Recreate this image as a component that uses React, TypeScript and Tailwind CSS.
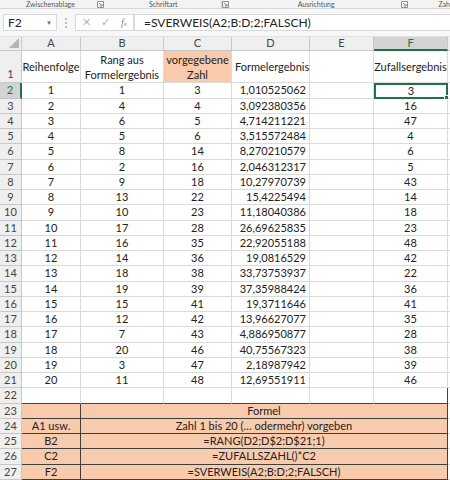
import React from 'react';

const A = ['1','2','3','4','5','6','7','8','9','10','11','12','13','14','15','16','17','18','19','20'];
const B = ['1','4','6','5','8','2','9','13','10','17','16','14','18','19','15','12','7','20','3','11'];
const C = ['3','4','5','6','14','16','18','22','23','28','35','36','38','39','41','42','43','46','47','48'];
const D = [
  '1,010525062', '3,092380356', '4,714211221', '3,515572484', '8,270210579',
  '2,046312317', '10,27970739', '15,4225494', '11,18040386', '26,69625835',
  '22,92055188', '19,0816529', '33,73753937', '37,35988424', '19,3711646',
  '13,96627077', '4,886950877', '40,75567323', '2,18987942', '12,69551911'
];
const F = ['3','16','47','4','6','5','43','14','18','23','48','42','22','36','41','35','28','38','39','46'];

const formeln = [
  ['', 'Formel'],
  ['A1 usw.', 'Zahl 1 bis 20 (… odermehr) vorgeben'],
  ['B2', '=RANG(D2;D$2:D$21;1)'],
  ['C2', '=ZUFALLSZAHL()*C2'],
  ['F2', '=SVERWEIS(A2;B:D;2;FALSCH)'],
];

// every 4th row is a pixel taller, like the scaled screenshot
const rowH = (n: number) => ((n - 2) % 4 === 0 ? 'h-[16px]' : 'h-[15px]');

const cell = 'border-r border-b border-[#dadada] flex items-center shrink-0';

const RowHead = ({ n, active }: { n: number; active?: boolean }) => (
  <div
    className={`w-[22px] shrink-0 flex items-center justify-center border-r border-b ${
      active
        ? 'bg-[#d3d3d3] text-[#217346] border-r-[#217346] border-r-2 border-b-[#c4c4c4]'
        : 'bg-[#efefef] text-[#444] border-[#c8c8c8]'
    }`}
  >
    {n}
  </div>
);

const Launcher = () => (
  <svg width="7" height="7" viewBox="0 0 7 7" className="shrink-0">
    <path d="M0.5 0.5h6v6h-6z" fill="none" stroke="#777" strokeWidth="0.8" />
    <path d="M2 2l3 3M5 3v2h-2" fill="none" stroke="#777" strokeWidth="0.8" />
  </svg>
);

export default function App() {
  return (
    <div className="w-[450px] h-[480px] overflow-hidden bg-white text-[11px] text-[#222] font-['Lato','Liberation_Sans',sans-serif] flex flex-col">
      {/* ribbon group labels */}
      <div className="h-[9px] bg-[#f3f3f3] border-b border-[#d6d6d6] flex items-end text-[7px] leading-[8px] text-[#555] shrink-0">
        <div className="w-[98px] pl-[26px]">Zwischenablage</div>
        <div className="w-[52px] flex items-center"><Launcher /></div>
        <div className="w-[73px]">Schriftart</div>
        <div className="w-[77px] flex items-center border-l border-[#d6d6d6] pl-[0px]"><Launcher /></div>
        <div className="w-[104px]">Ausrichtung</div>
        <div className="w-[38px] flex items-center"><Launcher /></div>
        <div>Zah</div>
      </div>

      {/* formula bar */}
      <div className="h-[28px] bg-[#f7f7f7] border-b border-[#e2e2e2] flex items-center shrink-0 pl-[3px]">
        <div className="w-[54px] h-[17px] bg-white border border-[#d9d9d9] flex items-center justify-between px-[4px] text-[12px] text-[#222]">
          <span>F2</span>
          <span className="text-[6px] text-[#666]">▼</span>
        </div>
        <div className="w-[18px] flex flex-col items-center gap-[2px]">
          <span className="w-[2px] h-[2px] bg-[#aaa] rounded-full" />
          <span className="w-[2px] h-[2px] bg-[#aaa] rounded-full" />
          <span className="w-[2px] h-[2px] bg-[#aaa] rounded-full" />
        </div>
        <div className="w-[59px] h-[17px] bg-white border border-[#d9d9d9] flex items-center text-[#b5b5b5]">
          <span className="w-[20px] text-center text-[11px]">✕</span>
          <span className="w-[19px] text-center text-[11px]">✓</span>
          <span className="w-[18px] text-center text-[10px] italic font-['Liberation_Serif',serif] text-[#888]">f<span className="text-[7px]">x</span></span>
        </div>
        <div className="flex-1 h-[17px] bg-white border border-[#d9d9d9] border-r-0 flex items-center pl-[9px] text-[12px] text-[#222]">
          =SVERWEIS(A2;B:D;2;FALSCH)
        </div>
      </div>

      {/* column headers */}
      <div className="h-[14px] flex shrink-0 text-[#444] bg-[#efefef]">
        <div className="w-[22px] shrink-0 border-r border-b border-[#c8c8c8] relative">
          <svg width="10" height="10" viewBox="0 0 10 10" className="absolute right-[2px] bottom-[2px]">
            <path d="M10 0L10 10L0 10Z" fill="#b5b5b5" />
          </svg>
        </div>
        <div className="w-[59px] shrink-0 border-r border-b border-[#c8c8c8] flex items-center justify-center">A</div>
        <div className="w-[83px] shrink-0 border-r border-b border-[#c8c8c8] flex items-center justify-center">B</div>
        <div className="w-[68px] shrink-0 border-r border-b border-[#c8c8c8] flex items-center justify-center">C</div>
        <div className="w-[78px] shrink-0 border-r border-b border-[#c8c8c8] flex items-center justify-center">D</div>
        <div className="w-[64px] shrink-0 border-r border-b border-[#c8c8c8] flex items-center justify-center">E</div>
        <div className="w-[74px] shrink-0 border-r border-b-2 border-[#c8c8c8] border-b-[#217346] bg-[#d3d3d3] text-[#217346] flex items-center justify-center">F</div>
        <div className="flex-1 border-b border-[#c8c8c8]" />
      </div>

      {/* row 1 */}
      <div className="h-[32px] flex shrink-0 leading-[15px]">
        <div className="w-[22px] shrink-0 border-r border-b border-[#c8c8c8] bg-[#efefef] text-[#444] flex items-end justify-center pb-[1px]">1</div>
        <div className={`${cell} w-[59px] justify-center`}>Reihenfolge</div>
        <div className={`${cell} w-[83px] justify-center text-center`}>Rang aus<br />Formelergebnis</div>
        <div className={`${cell} w-[68px] justify-center text-center bg-[#f8cbad]`}>vorgegebene<br />Zahl</div>
        <div className={`${cell} w-[78px] pl-[3px]`}>Formelergebnis</div>
        <div className={`${cell} w-[64px]`} />
        <div className={`${cell} w-[74px] justify-center`}>Zufallsergebnis</div>
        <div className="flex-1 border-b border-[#dadada]" />
      </div>

      {/* data rows 2-21 */}
      {A.map((a, i) => {
        const n = i + 2;
        return (
          <div key={n} className={`${rowH(n)} flex shrink-0`}>
            <RowHead n={n} active={n === 2} />
            <div className={`${cell} w-[59px] justify-center`}>{a}</div>
            <div className={`${cell} w-[83px] justify-center`}>{B[i]}</div>
            <div className={`${cell} w-[68px] justify-center`}>{C[i]}</div>
            <div className={`${cell} w-[78px] justify-end pr-[3px]`}>{D[i]}</div>
            <div className={`${cell} w-[64px]`} />
            {n === 2 ? (
              <div className="w-[74px] shrink-0 relative flex items-center justify-center border-2 border-[#217346]">
                {F[i]}
                <span className="absolute right-[-3px] bottom-[-3px] w-[5px] h-[5px] bg-[#217346] border border-white" />
              </div>
            ) : (
              <div className={`${cell} w-[74px] justify-center`}>{F[i]}</div>
            )}
            <div className="flex-1 border-b border-[#dadada]" />
          </div>
        );
      })}

      {/* row 22 */}
      <div className="h-[16px] flex shrink-0">
        <RowHead n={22} />
        <div className={`${cell} w-[59px] border-b-[#444]`} />
        <div className={`${cell} w-[83px] border-b-[#444]`} />
        <div className={`${cell} w-[68px] border-b-[#444]`} />
        <div className={`${cell} w-[78px] border-b-[#444]`} />
        <div className={`${cell} w-[64px] border-b-[#444]`} />
        <div className={`${cell} w-[74px] border-b-[#444] border-r-[#444]`} />
        <div className="flex-1 border-b border-[#dadada]" />
      </div>

      {/* formula explanation rows 23-27 */}
      {formeln.map(([l, r], i) => {
        const n = i + 23;
        return (
          <div key={n} className={`${rowH(n)} flex shrink-0`}>
            <RowHead n={n} />
            <div className="w-[59px] shrink-0 bg-[#f8cbad] border-r border-b border-[#3f3f3f] flex items-center justify-center">{l}</div>
            <div className="w-[367px] shrink-0 bg-[#f8cbad] border-r border-b border-[#3f3f3f] flex items-center justify-center">{r}</div>
            <div className="flex-1 border-b border-[#dadada]" />
          </div>
        );
      })}
    </div>
  );
}
